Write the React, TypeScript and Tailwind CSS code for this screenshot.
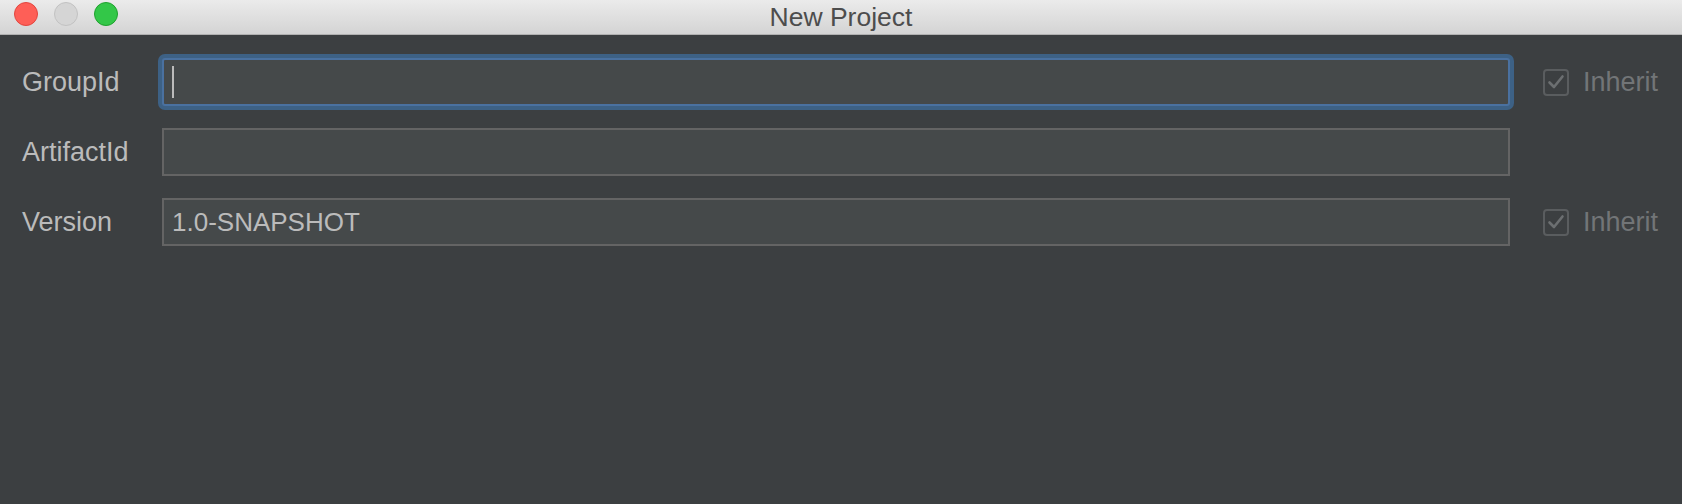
import React from 'react'

function CheckMark() {
  return (
    <div className="flex h-[27px] w-[26px] items-center justify-center rounded-[4px] border-2 border-[#5a5d5f]">
      <svg width="18" height="16" viewBox="0 0 18 16" fill="none">
        <path d="M2.5 8.5 L7 13 L15.5 2.5" stroke="#6c6f71" strokeWidth="2.6" strokeLinecap="round" strokeLinejoin="round" />
      </svg>
    </div>
  )
}

function Row({ label, value, focused, inherit }: { label: string; value?: string; focused?: boolean; inherit?: boolean }) {
  return (
    <div className="flex h-[48px] items-center">
      <div className="w-[140px] text-[27px] text-[#bbbbbb]">{label}</div>
      <div
        className={
          focused
            ? 'relative flex h-full flex-1 items-center rounded-[3px] border-2 border-[#4a71a0] bg-[#45494a] pl-[8px] shadow-[0_0_0_4px_#3d6185]'
            : 'flex h-full flex-1 items-center border-2 border-[#646464] bg-[#45494a] pl-[8px]'
        }
      >
        {focused && <div className="h-[32px] w-[2px] bg-[#bbbbbb]" />}
        {value && <span className="text-[26px] text-[#bbbbbb]">{value}</span>}
      </div>
      <div className="flex w-[149px] items-center pl-[33px]">
        {inherit && (
          <>
            <CheckMark />
            <span className="ml-[14px] text-[27px] text-[#727577]">Inherit</span>
          </>
        )}
      </div>
    </div>
  )
}

export default function App() {
  return (
    <div className="flex h-[504px] w-[1682px] flex-col bg-[#3c3f41]" style={{ fontFamily: '"Liberation Sans", Arial, sans-serif' }}>
      {/* Title bar */}
      <div className="relative flex h-[35px] shrink-0 items-center justify-center border-b border-[#b1b1b1] bg-gradient-to-b from-[#ebebeb] to-[#d4d4d4]">
        <div className="absolute left-[14px] top-[2px] flex gap-[16px]">
          <div className="h-[24px] w-[24px] rounded-full border border-[#e2463f] bg-[#fe5f57]" />
          <div className="h-[24px] w-[24px] rounded-full border border-[#c2c2c2] bg-[#d5d5d5]" />
          <div className="h-[24px] w-[24px] rounded-full border border-[#1fa12e] bg-[#33c748]" />
        </div>
        <span className="text-[26.5px] leading-none text-[#4d4d4d]">New Project</span>
      </div>

      {/* Form */}
      <div className="flex flex-col gap-[22px] pl-[22px] pr-[23px] pt-[23px]">
        <Row label="GroupId" focused inherit />
        <Row label="ArtifactId" />
        <Row label="Version" value="1.0-SNAPSHOT" inherit />
      </div>
    </div>
  )
}
